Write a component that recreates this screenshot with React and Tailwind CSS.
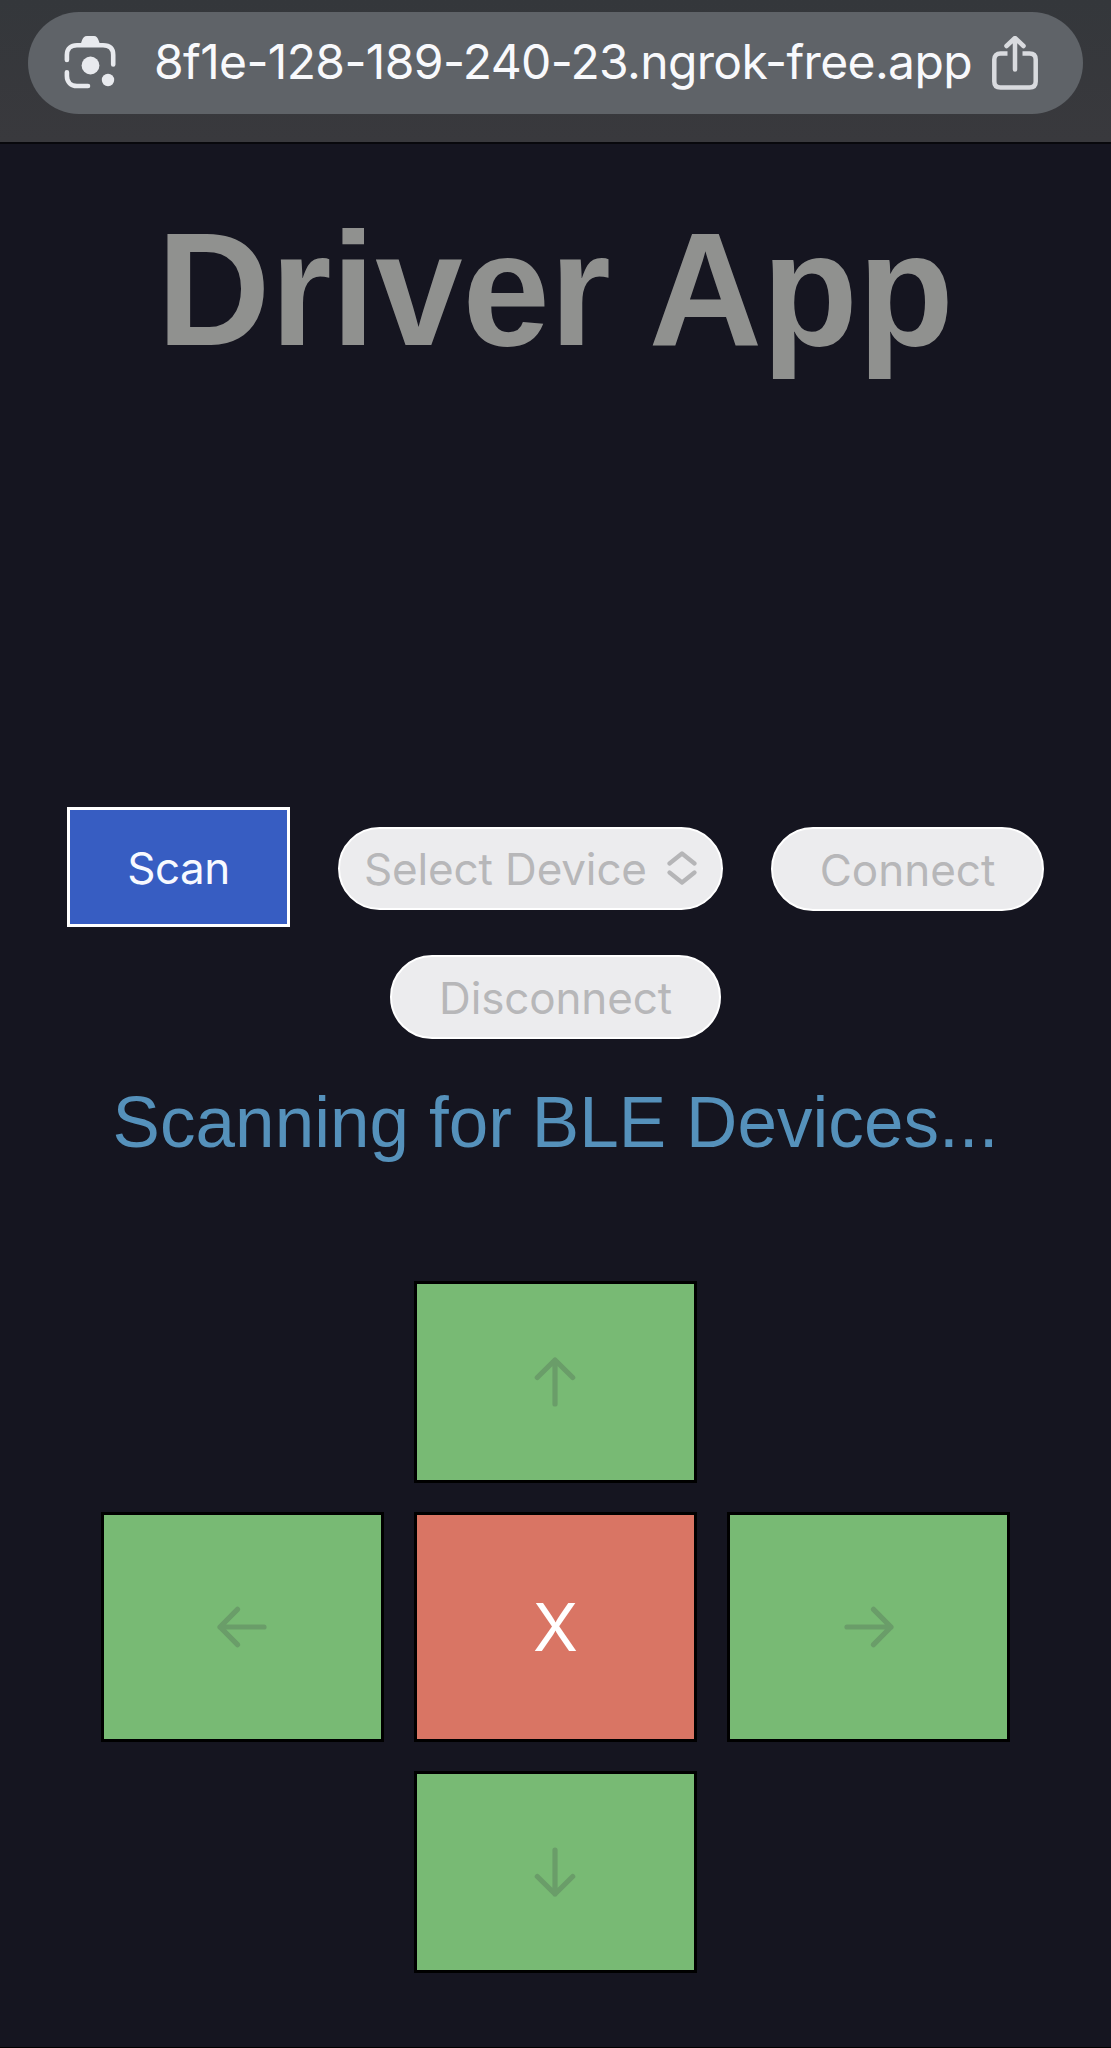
import React from "react";

const CameraIcon = () => (
  <svg className="h-[54px] w-[54px] shrink-0" viewBox="0 0 54 54" fill="none" stroke="#e8eaee" strokeWidth="4.6" strokeLinecap="round">
    <path d="M3.9 24V19C3.9 12.500 8 9.300 14 9.300H40C46.500 9.300 50.200 12.500 50.200 19V28.500" />
    <path d="M3.900 36.200V40C3.900 46 8 50 14 50H25" />
    <path d="M16.500 10C19 7.500 18.500 0 24 0H31C36 0 35.500 7.500 38.500 10Z" fill="#e8eaee" stroke="none" />
    <circle cx="27.500" cy="29.500" r="8.900" fill="#e8eaee" stroke="none" />
    <circle cx="45" cy="44" r="6.200" fill="#e8eaee" stroke="none" />
  </svg>
);

const ShareIcon = () => (
  <svg className="h-[54px] w-[46px] shrink-0" viewBox="0 0 46 54" fill="none" stroke="#d9dbdf" strokeWidth="4.500" strokeLinecap="round" strokeLinejoin="round">
    <path d="M15.500 17.500H8.500C4.500 17.500 2.300 19.700 2.300 23.500V45.500C2.300 49.500 4.500 51.500 8.500 51.500H37.500C41.500 51.500 43.700 49.500 43.700 45.500V23.500C43.700 19.700 41.500 17.500 37.500 17.500H30.500" strokeLinecap="butt" />
    <path d="M23 33.500V2.500M14.500 10L23 2L31.500 10" />
  </svg>
);

const ChevronUpDown = () => (
  <svg className="h-[34px] w-[30px] shrink-0" viewBox="0 0 30 34" fill="none" stroke="#b5b5b7" strokeWidth="4.200" strokeLinecap="round" strokeLinejoin="round">
    <path d="M2.500 12.500L15 2.500L27.500 12.500M2.500 21.500L15 31.500L27.500 21.500" />
  </svg>
);

const Arrow = ({ className }) => (
  <svg className={`h-[50px] w-[50px] ${className}`} viewBox="0 0 50 50" fill="none" stroke="#6a9d69" strokeWidth="5.200" strokeLinecap="round" strokeLinejoin="round">
    <path d="M25 47V3M7.300 20.500L25 3L42.700 20.500" />
  </svg>
);

const pad = "flex items-center justify-center border-[3px] border-black";
const pill = "rounded-full border-2 border-white bg-[#ececee] pt-px text-[44px] leading-none text-[#b7b7b9] whitespace-nowrap";

export default function App() {
  return (
    <div className="flex h-[2048px] w-[1111px] flex-col overflow-hidden border-b border-black bg-[#151520] font-['Inter',sans-serif]">
      <header className="h-[144px] shrink-0 border-b-2 border-[#08080c] bg-linear-to-b from-[#34373b] to-[#39393d] pt-3 pl-7">
        <div className="flex h-[102px] w-[1055px] items-center rounded-full bg-[#5f6368] pl-[35px]">
          <CameraIcon />
          <span className="ml-[37px] w-[821px] pb-[3px] text-[48px] leading-none tracking-[-0.64px] whitespace-nowrap text-[#f8f9fc]">8f1e-128-189-240-23.ngrok-free.app</span>
          <span className="ml-[17px]"><ShareIcon /></span>
        </div>
      </header>

      <main className="flex flex-col">
        <h1 className="mt-[55px] h-[180px] scale-y-[1.03] text-center font-['Liberation_Sans',sans-serif] text-[157px] leading-[180px] font-bold whitespace-nowrap text-[#90918f]">
          Driver App
        </h1>

        <div className="mt-[428px] flex h-[120px] items-start justify-center">
          <button className="h-[120px] w-[223px] border-[3px] border-white bg-[#375dc2] pt-px text-[44px] leading-none tracking-[-0.5px] text-[#f7f9ff]">Scan</button>
          <button className={`${pill} mt-5 ml-[48px] flex h-[83px] w-[385px] items-center justify-between pr-6 pl-6 tracking-[-0.15px]`}>
            <span>Select Device</span>
            <span className="pb-[3px]"><ChevronUpDown /></span>
          </button>
          <button className={`${pill} mt-5 ml-12 h-[84px] w-[273px]`}>Connect</button>
        </div>
        <div className="mt-[28px] flex justify-center">
          <button className={`${pill} h-[84px] w-[331px] tracking-[-0.15px]`}>Disconnect</button>
        </div>

        <p className="mt-[42px] h-[82px] scale-y-[1.03] text-center font-['Liberation_Sans',sans-serif] text-[71px] leading-[82px] tracking-[0.07px] whitespace-nowrap text-[#5591bb]">
          Scanning for BLE Devices...
        </p>

        <div className="mt-[118px] ml-[100.5px] grid grid-cols-[283.5px_283.5px_283.5px] grid-rows-[202px_230px_202px] gap-x-[29.7px] gap-y-[29px]">
          <button className={`${pad} col-start-2 bg-[#78ba74]`}><Arrow className="rotate-0" /></button>
          <button className={`${pad} col-start-1 row-start-2 bg-[#78ba74]`}><Arrow className="-rotate-90" /></button>
          <button className={`${pad} col-start-2 row-start-2 bg-[#d97564] text-[66px] leading-none text-white`}>X</button>
          <button className={`${pad} col-start-3 row-start-2 bg-[#78ba74]`}><Arrow className="rotate-90" /></button>
          <button className={`${pad} col-start-2 row-start-3 bg-[#78ba74]`}><Arrow className="rotate-180" /></button>
        </div>
      </main>
    </div>
  );
}
